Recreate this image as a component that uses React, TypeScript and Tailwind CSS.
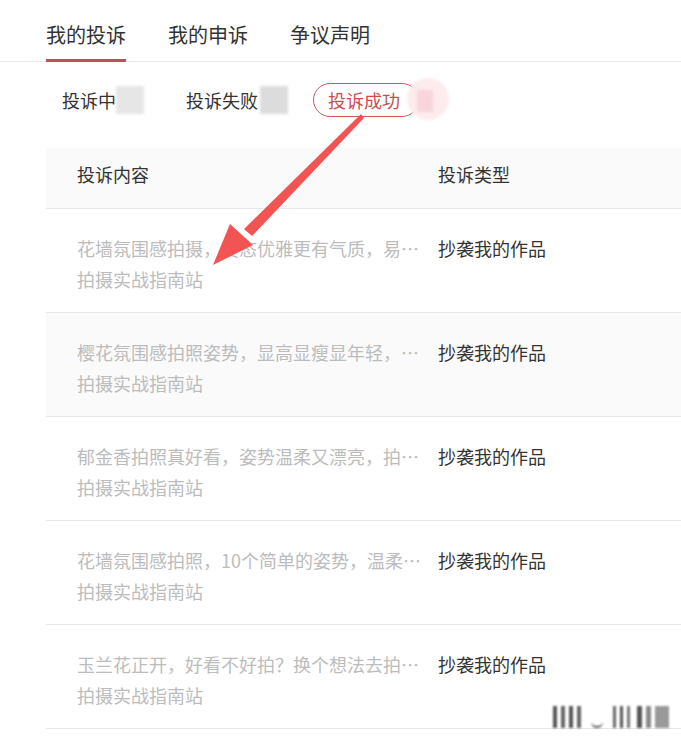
const rows = [
  { title: '花墙氛围感拍摄，姿态优雅更有气质，易…', gray: false },
  { title: '樱花氛围感拍照姿势，显高显瘦显年轻，…', gray: true },
  { title: '郁金香拍照真好看，姿势温柔又漂亮，拍…', gray: false },
  { title: '花墙氛围感拍照，10个简单的姿势，温柔…', gray: false },
  { title: '玉兰花正开，好看不好拍？换个想法去拍…', gray: false },
]

const tabs = ['我的投诉', '我的申诉', '争议声明']

const Blur = ({ className }: { className: string }) => (
  <span className={`inline-block blur-[1.5px] ${className}`} />
)

const Arrow = () => (
  <svg
    className="pointer-events-none absolute left-0 top-0"
    width="681"
    height="744"
    viewBox="0 0 681 744"
  >
    <path d="M361 114 L364 118 L252 236 L244 229 Z" fill="#f25454" />
    <path d="M230 224 L253 245 L213 265 Z" fill="#f25454" />
  </svg>
)

const Watermark = () => (
  <div className="absolute left-[553px] top-[706px] flex items-end gap-[4px] blur-[1px]">
    <span className="h-[22px] w-[4px] bg-[#555]" />
    <span className="h-[22px] w-[4px] bg-[#666]" />
    <span className="h-[22px] w-[4px] bg-[#555]" />
    <span className="h-[22px] w-[4px] bg-[#666]" />
    <span className="mx-[6px] h-[8px] w-[12px] rounded-b-full border-b-2 border-[#555]" />
    <span className="h-[22px] w-[3px] bg-[#666]" />
    <span className="h-[22px] w-[3px] bg-[#555]" />
    <span className="h-[22px] w-[3px] bg-[#777]" />
    <span className="ml-[3px] h-[22px] w-[5px] bg-[#555]" />
    <span className="h-[22px] w-[5px] bg-[#888]" />
    <span className="h-[22px] w-[14px] bg-[#999]" />
  </div>
)

export default function App() {
  return (
    <div
      className="relative h-[744px] w-[681px] overflow-hidden bg-white text-[#333]"
      style={{ fontFamily: '"Noto Sans CJK SC", "Noto Sans", sans-serif' }}
    >
      {/* main tabs */}
      <div className="flex h-[62px] gap-[42px] border-b border-[#ebebeb] pl-[46px]">
        {tabs.map((tab, i) => (
          <div
            key={tab}
            className={`-mb-px flex items-center pt-[11px] text-[20px] leading-none ${
              i === 0 ? 'border-b-[3px] border-[#bd5256]' : 'border-b-[3px] border-transparent'
            }`}
          >
            {tab}
          </div>
        ))}
      </div>

      {/* status filter */}
      <div className="mt-[21px] flex h-[34px] items-center pl-[62px] text-[18px] leading-none">
        <span>投诉中</span>
        <Blur className="h-[28px] w-[28px] bg-[#e6e6e6]" />
        <span className="ml-[42px]">投诉失败</span>
        <Blur className="ml-[2px] h-[28px] w-[28px] bg-[#dcdcdc]" />
        <div className="relative ml-[25px] flex h-[34px] items-center">
          <span className="flex h-[34px] w-[106px] items-center rounded-full border border-[#d0585a] pl-[14px] text-[#c94d4f]">
            投诉成功
          </span>
          <Blur className="absolute left-[94px] top-[-5px] h-[42px] w-[42px] rounded-full bg-[#fdebee]" />
          <Blur className="absolute left-[104px] top-[7px] h-[22px] w-[16px] bg-[#f7d5db]" />
        </div>
      </div>

      {/* table */}
      <div className="ml-[46px] mt-[31px]">
        <div className="flex h-[61px] border-b border-[#e8e8e8] bg-[#fafafa] pl-[31px] pt-[15px] text-[18px] leading-[22px]">
          <div className="w-[361px]">投诉内容</div>
          <div>投诉类型</div>
        </div>
        {rows.map((row, i) => (
          <div
            key={i}
            className={`flex h-[104px] border-b border-[#e8e8e8] pl-[31px] pt-[24px] text-[18px] leading-[31px] ${
              row.gray ? 'bg-[#fafafa]' : 'bg-white'
            }`}
          >
            <div className="w-[361px] shrink-0 whitespace-nowrap text-[#bcbcbc]">
              <div>{row.title}</div>
              <div>拍摄实战指南站</div>
            </div>
            <div className="whitespace-nowrap text-[#333]">抄袭我的作品</div>
          </div>
        ))}
      </div>

      <Arrow />
      <Watermark />
    </div>
  )
}
